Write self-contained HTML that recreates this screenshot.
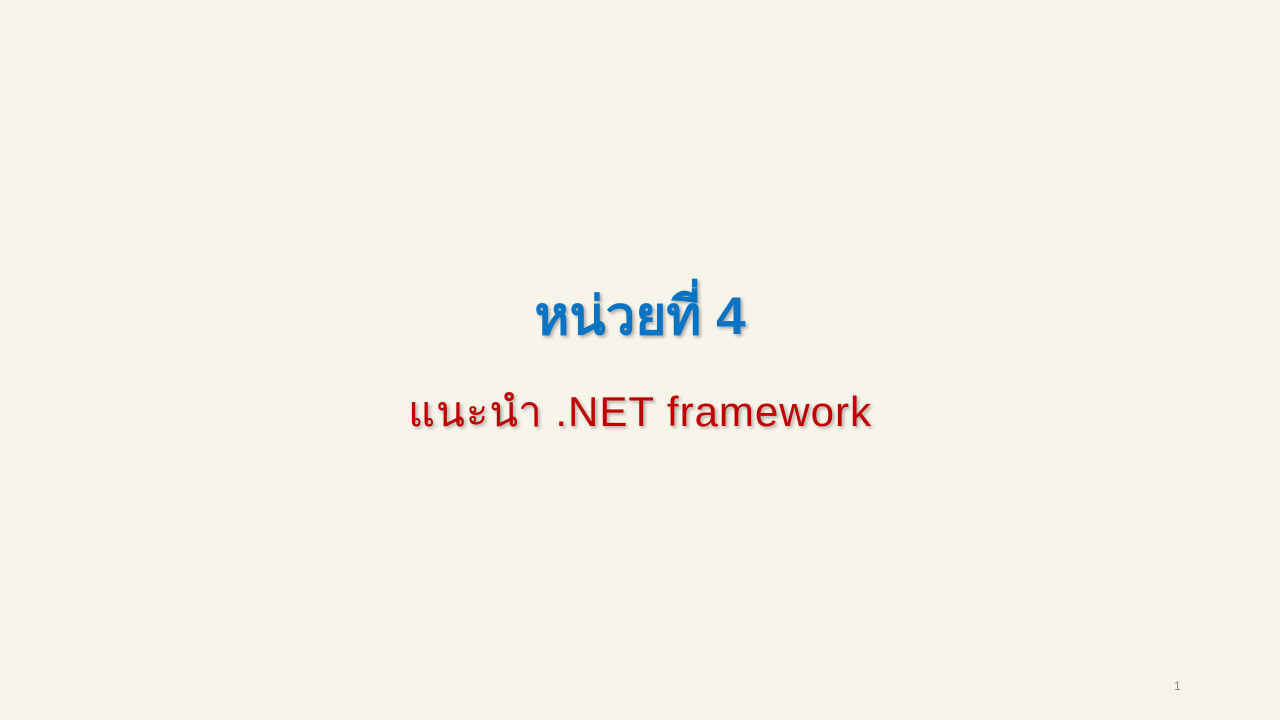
<!DOCTYPE html>
<html><head><meta charset="utf-8"><style>
html,body{margin:0;padding:0;width:1280px;height:720px;overflow:hidden;background:#f7f4ea;}
body{position:relative;font-family:"Liberation Sans","DejaVu Sans",sans-serif;}
.t1{position:absolute;left:0;width:1280px;top:282px;text-align:center;font-size:53px;font-weight:bold;color:#0a74c4;text-shadow:2px 2px 3px rgba(0,0,0,0.3);line-height:70px;}
.t2{position:absolute;left:0;width:1280px;top:384px;text-align:center;font-size:42px;letter-spacing:1px;color:#c00000;text-shadow:2px 2px 3px rgba(0,0,0,0.3);line-height:56px;}
.n{position:absolute;left:1174px;top:679px;font-size:12px;color:#888;}
</style></head><body>
<div class="t1">หน่วยที่ 4</div>
<div class="t2">แนะนำ .NET framework</div>
<div class="n">1</div>
</body></html>
